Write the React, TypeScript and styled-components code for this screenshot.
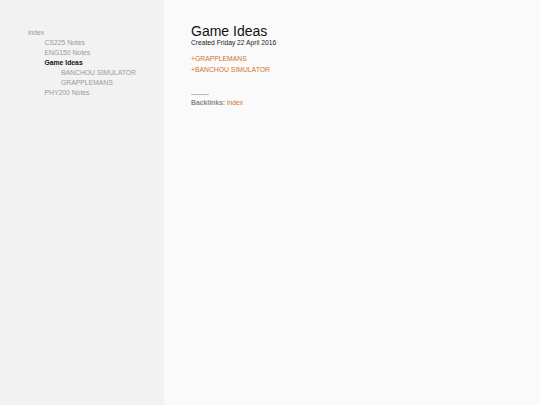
import React from 'react';
import styled, { createGlobalStyle } from 'styled-components';

const GlobalStyle = createGlobalStyle`
  html, body {
    margin: 0;
    padding: 0;
    height: 100%;
  }
  body {
    font-family: "Liberation Sans", Arial, sans-serif;
    background-color: #fafafa;
  }
  #root {
    height: 100%;
  }
`;

const Page = styled.div`
  display: flex;
  width: 540px;
  height: 405px;
  overflow: hidden;
`;

const Sidebar = styled.nav`
  width: 164px;
  flex-shrink: 0;
  background-color: #f2f2f2;
  padding: 28px 0 0 28px;
  box-sizing: border-box;
`;

const TreeItem = styled.div<{ $level: number; $active?: boolean }>`
  padding-left: ${p => p.$level * 16.5}px;
  font-size: 6.8px;
  line-height: 10px;
  color: ${p => (p.$active ? '#111' : '#999')};
  font-weight: ${p => (p.$active ? 'bold' : 'normal')};
  white-space: nowrap;
`;

const Main = styled.main`
  flex: 1;
  padding: 24px 0 0 27px;
  background-color: #fafafa;
`;

const Title = styled.h1`
  margin: 0;
  font-size: 14px;
  font-weight: normal;
  line-height: 15px;
  color: #111;
`;

const Created = styled.div`
  font-size: 6.7px;
  line-height: 8px;
  color: #222;
`;

const LinkList = styled.div`
  margin-top: 7px;
`;

const NoteLink = styled.div`
  font-size: 6.8px;
  line-height: 10.5px;
  color: #d2722e;
`;

const Rule = styled.hr`
  width: 18px;
  margin: 19px 0 0 0;
  border: none;
  border-top: 1px solid #bbb;
`;

const Backlinks = styled.div`
  margin-top: 3px;
  font-size: 6.8px;
  line-height: 10px;
  color: #888;
  font-weight: bold;
`;

const BacklinkRef = styled.span`
  color: #d2722e;
  font-weight: normal;
`;

const tree = [
  { label: 'index', level: 0 },
  { label: 'CS225 Notes', level: 1 },
  { label: 'ENG150 Notes', level: 1 },
  { label: 'Game Ideas', level: 1, active: true },
  { label: 'BANCHOU SIMULATOR', level: 2 },
  { label: 'GRAPPLEMANS', level: 2 },
  { label: 'PHY200 Notes', level: 1 },
];

const App: React.FC = () => {
  return (
    <>
      <GlobalStyle />
      <Page>
        <Sidebar>
          {tree.map(item => (
            <TreeItem key={item.label} $level={item.level} $active={item.active}>
              {item.label}
            </TreeItem>
          ))}
        </Sidebar>
        <Main>
          <Title>Game Ideas</Title>
          <Created>Created Friday 22 April 2016</Created>
          <LinkList>
            <NoteLink>+GRAPPLEMANS</NoteLink>
            <NoteLink>+BANCHOU SIMULATOR</NoteLink>
          </LinkList>
          <Rule />
          <Backlinks>
            Backlinks: <BacklinkRef>index</BacklinkRef>
          </Backlinks>
        </Main>
      </Page>
    </>
  );
};

export default App;
